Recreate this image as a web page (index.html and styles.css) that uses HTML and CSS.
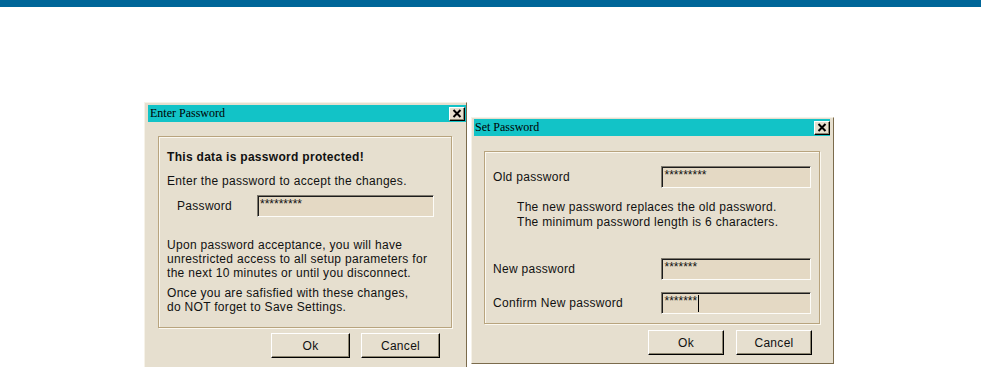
FILE: index.html
```html
<!DOCTYPE html>
<html>
<head>
<meta charset="utf-8">
<link rel="stylesheet" href="styles.css">
</head>
<body>
<div class="topbar"></div>
<div class="stage">
  <div class="dialog dialog-enter">
    <div class="titlebar">
      <span class="title">Enter Password</span>
      <span class="close"><svg width="10" height="9" viewBox="0 0 10 9"><path d="M1.5 1 L8.5 8 M8.5 1 L1.5 8" stroke="#000" stroke-width="2" fill="none"/></svg></span>
    </div>
    <div class="group group-enter">
      <p class="heading">This data is password protected!</p>
      <p class="line enter-line">Enter the password to accept the changes.</p>
      <div class="row pw-row">
        <span class="label label-enter">Password</span>
        <span class="field field-enter">*********</span>
      </div>
      <p class="para upon">Upon password acceptance, you will have<br>unrestricted access to all setup parameters for<br>the next 10 minutes or until you disconnect.</p>
      <p class="para once">Once you are safisfied with these changes,<br>do NOT forget to Save Settings.</p>
    </div>
    <div class="buttons buttons-enter">
      <span class="btn btn-enter">Ok</span>
      <span class="btn btn-enter">Cancel</span>
    </div>
  </div>

  <div class="dialog dialog-set">
    <div class="titlebar">
      <span class="title">Set Password</span>
      <span class="close"><svg width="10" height="9" viewBox="0 0 10 9"><path d="M1.5 1 L8.5 8 M8.5 1 L1.5 8" stroke="#000" stroke-width="2" fill="none"/></svg></span>
    </div>
    <div class="group group-set">
      <div class="row old-row">
        <span class="label label-set">Old password</span>
        <span class="field field-set">*********</span>
      </div>
      <p class="note">The new password replaces the old password.<br>The minimum password length is 6 characters.</p>
      <div class="row new-row">
        <span class="label label-set">New password</span>
        <span class="field field-set">*******</span>
      </div>
      <div class="row confirm-row">
        <span class="label label-set">Confirm New password</span>
        <span class="field field-set">*******<span class="caret"></span></span>
      </div>
    </div>
    <div class="buttons buttons-set">
      <span class="btn btn-set">Ok</span>
      <span class="btn btn-set">Cancel</span>
    </div>
  </div>
</div>
</body>
</html>
```

FILE: styles.css
```css
* { box-sizing: border-box; }

html, body {
  margin: 0;
  padding: 0;
  background: #ffffff;
  height: 367px;
  overflow: hidden;
}

body {
  font-family: "Liberation Sans", Arial, sans-serif;
  font-size: 12px;
  letter-spacing: 0.3px;
  color: #111;
}

p { margin: 0; }

.topbar {
  height: 7px;
  background: #006699;
}

.stage {
  display: flex;
  align-items: flex-start;
  padding-left: 144px;
  margin-top: 95px;
  gap: 4px;
}

.dialog {
  background: #e6dfcf;
  border: 1px solid;
  border-color: #f6f2e8 #7b6b4c #7b6b4c #f6f2e8;
  display: flex;
  flex-direction: column;
}

.dialog-enter {
  width: 323px;
  height: 266px;
  padding: 2px 0 0 3px;
}

.dialog-set {
  width: 363px;
  height: 247px;
  margin-top: 15px;
  padding: 1px 3px 0 2px;
}

.titlebar {
  height: 17px;
  background: #12c3c7;
  display: flex;
  align-items: center;
  justify-content: space-between;
}

.title {
  font-family: "Liberation Serif", "Times New Roman", serif;
  font-size: 12px;
  letter-spacing: 0;
  color: #000;
  padding-left: 2px;
}

.dialog-set .title { padding-left: 1px; }

.close {
  width: 16px;
  height: 14px;
  margin-right: 1px;
  background: #e6dfcf;
  border: 1px solid;
  border-color: #ffffff #000000 #000000 #ffffff;
  box-shadow: inset -1px -1px 0 #8c8570;
  display: flex;
  align-items: center;
  justify-content: center;
}

.dialog-set .close { margin-right: 0; }

.group {
  border: 1px solid #b8a47e;
  box-shadow: inset 1px 1px 0 #fbf8f0, 1px 1px 0 #fbf8f0;
}

.group-enter {
  width: 294px;
  margin: 14px 0 0 10px;
  padding: 13px 8px 13px 8px;
}

.group-set {
  width: 336px;
  margin: 15px 0 0 10px;
  padding: 14px 8px 9px 8px;
}

.heading {
  font-weight: bold;
  line-height: 14px;
}

.line, .para {
  line-height: 14px;
}

.enter-line { margin-top: 10px; }

.row {
  display: flex;
  align-items: center;
  height: 22px;
}

.pw-row { margin-top: 7px; }

.label-enter {
  width: 80px;
  margin-left: 10px;
}

.label-set {
  width: 169px;
}

.field {
  height: 22px;
  background: #e4d9c4;
  border: 1px solid;
  border-color: #7d786c #fdfcf8 #fdfcf8 #7d786c;
  box-shadow: inset 1px 1px 0 #1c1c1c;
  padding: 1px 0 0 2px;
  line-height: 14px;
  letter-spacing: 0;
  font-size: 12px;
  display: flex;
  align-items: flex-start;
}

.field-enter { width: 177px; }
.field-set { width: 150px; }

.caret {
  display: inline-block;
  width: 1px;
  height: 17px;
  background: #000;
  margin-left: 1px;
  margin-top: 1px;
}

.upon { margin-top: 21px; }
.once { margin-top: 6px; }

.note {
  margin: 12px 0 0 24px;
  line-height: 15px;
}

.new-row { margin-top: 28px; }
.confirm-row { margin-top: 12px; }

.buttons {
  display: flex;
  justify-content: flex-end;
}

.buttons-enter {
  margin-top: 5px;
  padding-right: 26px;
  gap: 11px;
}

.buttons-set {
  margin-top: 6px;
  padding-right: 18px;
  gap: 12px;
}

.btn {
  height: 25px;
  background: #e6dfcf;
  border: 1px solid;
  border-color: #ffffff #000000 #000000 #ffffff;
  box-shadow: inset -1px -1px 0 #8c8570;
  display: flex;
  align-items: center;
  justify-content: center;
  color: #111;
}

.btn-enter { width: 79px; }
.btn-set { width: 76px; }
```
